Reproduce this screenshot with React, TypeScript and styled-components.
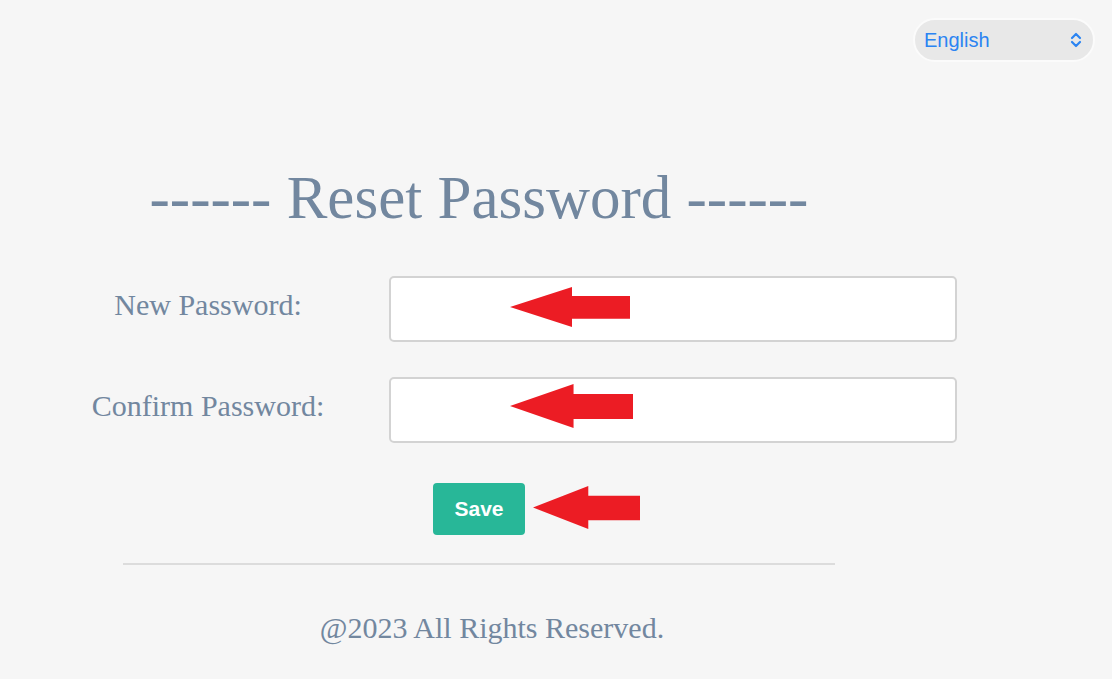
import { FC } from 'react'
import styled, { createGlobalStyle } from 'styled-components'

const GlobalStyle = createGlobalStyle`
  html, body {
    margin: 0;
    padding: 0;
    background: #f6f6f6;
  }
  * { box-sizing: border-box; }
`

const Page = styled.div`
  min-height: 100vh;
  background: #f6f6f6;
  padding-top: 18px;
  font-family: "Liberation Serif", "Times New Roman", serif;
  color: #72879f;
`

const TopBar = styled.div`
  display: flex;
  justify-content: flex-end;
  padding-right: 17px;
`

const LangSelect = styled.div`
  width: 182px;
  height: 44px;
  border-radius: 22px;
  background: #e8e8e8;
  border: 2px solid #fbfbfb;
  display: flex;
  align-items: center;
  justify-content: space-between;
  padding: 0 10px 0 9px;
  font-family: "Liberation Sans", Arial, sans-serif;
  font-size: 20px;
  color: #2b84f2;
  cursor: pointer;
  svg {
    width: 14px;
    height: 18px;
  }
`

const Main = styled.main`
  width: 958px;
`

const Title = styled.h1`
  margin: 105px 0 0;
  font-weight: normal;
  font-size: 61px;
  line-height: 61px;
  text-align: center;
  color: #72879f;
  white-space: nowrap;
`

const Form = styled.form`
  margin-top: 48px;
  display: grid;
  row-gap: 35px;
`

const Row = styled.div`
  display: grid;
  grid-template-columns: 256px 568px;
  column-gap: 53px;
  padding-left: 80px;
  align-items: center;
`

const Label = styled.label`
  font-size: 30px;
  text-align: center;
  padding-bottom: 8px;
  white-space: nowrap;
`

const FieldWrap = styled.div`
  position: relative;
`

const Input = styled.input`
  display: block;
  width: 568px;
  height: 66px;
  background: #fff;
  border: 2px solid #d3d3d3;
  border-radius: 5px;
  outline: none;
  font-size: 20px;
  padding: 0 14px;
`

const Actions = styled.div`
  display: flex;
  justify-content: center;
  margin-top: 5px;
`

const ButtonWrap = styled.div`
  position: relative;
`

const SaveButton = styled.button`
  width: 92px;
  height: 52px;
  border: none;
  border-radius: 4px;
  background: #28b798;
  color: #fff;
  font-family: "Liberation Sans", Arial, sans-serif;
  font-weight: bold;
  font-size: 21px;
  cursor: pointer;
`

const ArrowMark = styled.svg<{ $left: number; $top: number; $w: number; $h: number }>`
  position: absolute;
  left: ${p => p.$left}px;
  top: ${p => p.$top}px;
  width: ${p => p.$w}px;
  height: ${p => p.$h}px;
  pointer-events: none;
`

const Divider = styled.hr`
  margin: 28px 123px 0;
  border: none;
  height: 2px;
  background: #dcdcdc;
`

const Footer = styled.footer`
  margin-top: 46px;
  padding-left: 26px;
  text-align: center;
  font-size: 30px;
  color: #72879f;
`

type ArrowProps = { left: number; top: number; w: number; h: number }

const Arrow: FC<ArrowProps> = ({ left, top, w, h }) => (
  <ArrowMark $left={left} $top={top} $w={w} $h={h} viewBox="0 0 120 44" preserveAspectRatio="none">
    <polygon points="0,22 62,0 62,10 120,10 120,35 62,35 62,44" fill="#ec1c24" />
  </ArrowMark>
)

const Chevrons: FC = () => (
  <svg viewBox="0 0 14 18" fill="none" stroke="#2b84f2" strokeWidth="2.2" strokeLinecap="round" strokeLinejoin="round">
    <path d="M3 7 L7 3 L11 7" />
    <path d="M3 11 L7 15 L11 11" />
  </svg>
)

const App: FC = () => {
  return (
    <Page>
      <GlobalStyle />
      <TopBar>
        <LangSelect>
          <span>English</span>
          <Chevrons />
        </LangSelect>
      </TopBar>
      <Main>
        <Title>------ Reset Password ------</Title>
        <Form onSubmit={e => e.preventDefault()}>
          <Row>
            <Label htmlFor="newPassword">New Password:</Label>
            <FieldWrap>
              <Input id="newPassword" type="password" />
              <Arrow left={121} top={11} w={120} h={40} />
            </FieldWrap>
          </Row>
          <Row>
            <Label htmlFor="confirmPassword">Confirm Password:</Label>
            <FieldWrap>
              <Input id="confirmPassword" type="password" />
              <Arrow left={121} top={7} w={123} h={44} />
            </FieldWrap>
          </Row>
          <Actions>
            <ButtonWrap>
              <SaveButton type="submit">Save</SaveButton>
              <Arrow left={100} top={3} w={107} h={43} />
            </ButtonWrap>
          </Actions>
        </Form>
        <Divider />
        <Footer>@2023 All Rights Reserved.</Footer>
      </Main>
    </Page>
  )
}

export default App
